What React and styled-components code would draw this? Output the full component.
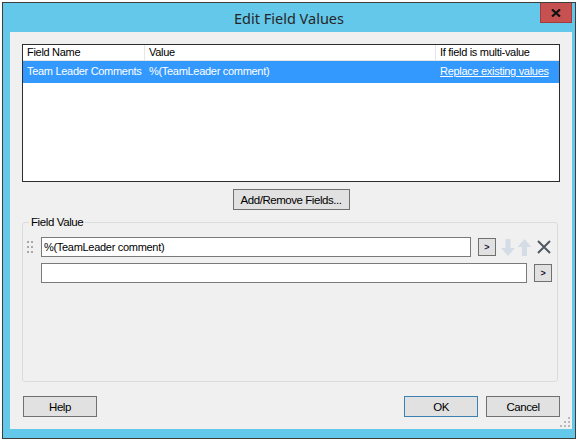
import React from "react";
import styled, { createGlobalStyle } from "styled-components";

const GlobalStyle = createGlobalStyle`
  html, body {
    margin: 0;
    padding: 0;
    background: #ffffff;
  }
  * {
    box-sizing: border-box;
  }
`;

const uiFont = `"Liberation Sans", Arial, sans-serif`;

const Frame = styled.div`
  margin: 2px 0 0 2px;
  width: 574px;
  height: 437px;
  border: 1px solid #3d3d3d;
  background: #63c8ea;
  display: flex;
  flex-direction: column;
  font-family: ${uiFont};
  font-size: 11px;
  letter-spacing: -0.3px;
  color: #000;
`;

const TitleBar = styled.div`
  height: 29px;
  display: grid;
  grid-template-columns: 1fr auto 1fr;
  align-items: center;
`;

const Title = styled.div`
  grid-column: 2;
  font-family: "Noto Sans", "Open Sans", sans-serif;
  font-size: 14.5px;
  letter-spacing: 0;
  color: #262626;
  padding-top: 1px;
`;

const CloseButton = styled.div`
  grid-column: 3;
  justify-self: end;
  align-self: start;
  margin-right: 3px;
  width: 32px;
  height: 20px;
  background: #c75050;
  border: 1px solid #a53c3c;
  border-top: none;
  display: flex;
  align-items: center;
  justify-content: center;
`;

const Client = styled.div`
  position: relative;
  margin: 0 3px 0 7px;
  height: 397px;
  background: #f0f0f0;
  padding: 12px;
  display: flex;
  flex-direction: column;
`;

const ListBox = styled.div`
  height: 138px;
  border: 1px solid #2d2d2d;
  background: #ffffff;
  display: flex;
  flex-direction: column;
`;

const columns = "122px 291px 1fr";

const HeaderRow = styled.div`
  display: grid;
  grid-template-columns: ${columns};
  height: 16px;
`;

const HeaderCell = styled.div`
  padding-left: 4px;
  line-height: 15px;
  border-bottom: 1px solid #e5e5e5;
  border-right: ${(p) => (p.last ? "none" : "1px solid #e5e5e5")};
  white-space: nowrap;
  overflow: hidden;
`;

const DataRow = styled.div`
  display: grid;
  grid-template-columns: ${columns};
  height: 22px;
  background: ${(p) => (p.selected ? "#3399ff" : "transparent")};
  color: ${(p) => (p.selected ? "#ffffff" : "#000000")};
`;

const DataCell = styled.div`
  padding-left: ${(p) => p.pad || 4}px;
  line-height: 21px;
  white-space: nowrap;
  overflow: hidden;
`;

const Link = styled.span`
  text-decoration: underline;
`;

const PushButton = styled.button`
  font-family: ${uiFont};
  font-size: 11.5px;
  letter-spacing: -0.45px;
  color: #000;
  height: 21px;
  width: ${(p) => p.w || 74}px;
  padding: 0;
  background: #e1e1e1;
  border: 1px solid ${(p) => (p.primary ? "#3c7fb1" : "#707070")};
  border-radius: 0;
`;

const CenterRow = styled.div`
  margin-top: 7px;
  display: flex;
  justify-content: center;
`;

const Group = styled.fieldset`
  flex: 1;
  margin: 5px 0 0 0;
  min-width: 0;
  border: 1px solid #dcdcdc;
  border-radius: 3px;
  padding: 8px 5px 8px 4px;
  display: flex;
  flex-direction: column;
  gap: 6px;
  width: 536px;
`;

const Legend = styled.legend`
  margin-left: 2px;
  padding: 0 2px;
  line-height: 14px;
  font-size: 11.5px;
  letter-spacing: -0.4px;
`;

const ValueRow = styled.div`
  display: flex;
  align-items: center;
  height: 20px;
`;

const Grip = styled.div`
  width: 6px;
  margin-right: 8px;
  height: 12px;
  display: grid;
  grid-template-columns: 2px 2px;
  column-gap: 2px;
  row-gap: 3px;
  align-content: center;
  span {
    width: 2px;
    height: 2px;
    background: ${(p) => (p.hidden ? "transparent" : "#a8a8a8")};
  }
`;

const TextBox = styled.div`
  width: ${(p) => p.w}px;
  height: 20px;
  border: 1px solid #7a7a7a;
  background: #ffffff;
  padding-left: 2px;
  line-height: 18px;
  white-space: nowrap;
  overflow: hidden;
`;

const PickButton = styled.div`
  width: 18px;
  height: 18px;
  margin-left: 7px;
  background: #e1e1e1;
  border: 1px solid #707070;
  display: flex;
  align-items: center;
  justify-content: center;
  font-size: 9px;
  font-weight: bold;
  color: #1a1a3a;
  letter-spacing: 0;
`;

const Tools = styled.div`
  display: flex;
  align-items: center;
  margin-left: 5px;
  gap: 2px;
`;

const Footer = styled.div`
  margin-top: 14px;
  padding-left: 1px;
  display: flex;
  align-items: center;
  gap: 8px;
`;

const Spacer = styled.div`
  flex: 1;
`;

const SizeGrip = styled.svg`
  position: absolute;
  right: 2px;
  bottom: 2px;
`;

function Dots({ hidden }) {
  return (
    <Grip hidden={hidden}>
      {Array.from({ length: 6 }).map((_, i) => (
        <span key={i} />
      ))}
    </Grip>
  );
}

function DownArrow() {
  return (
    <svg width="14" height="17" viewBox="0 0 14 17">
      <path d="M4.5 0h5v9h4.5l-7 8-7-8h4.5z" fill="#d4dde6" />
    </svg>
  );
}

function UpArrow() {
  return (
    <svg width="15" height="17" viewBox="0 0 15 17">
      <path d="M7.5 0l7 8h-4.5v9h-5v-9h-4.5z" fill="#d4dde6" />
    </svg>
  );
}

function RemoveIcon() {
  return (
    <svg width="16" height="16" viewBox="0 0 16 16" style={{ marginLeft: 2 }}>
      <path d="M2 2l12 12M14 2l-12 12" stroke="#4f5863" strokeWidth="2" />
    </svg>
  );
}

export default function App() {
  return (
    <>
      <GlobalStyle />
      <Frame>
        <TitleBar>
          <Title>Edit Field Values</Title>
          <CloseButton>
            <svg width="10" height="8" viewBox="0 0 10 8">
              <path d="M1 0.5l8 7M9 0.5l-8 7" stroke="#111" strokeWidth="2.2" />
            </svg>
          </CloseButton>
        </TitleBar>
        <Client>
          <ListBox>
            <HeaderRow>
              <HeaderCell>Field Name</HeaderCell>
              <HeaderCell>Value</HeaderCell>
              <HeaderCell last>If field is multi-value</HeaderCell>
            </HeaderRow>
            <DataRow selected>
              <DataCell>Team Leader Comments</DataCell>
              <DataCell>%(TeamLeader comment)</DataCell>
              <DataCell pad={4}>
                <Link>Replace existing values</Link>
              </DataCell>
            </DataRow>
          </ListBox>
          <CenterRow>
            <PushButton w={117}>Add/Remove Fields...</PushButton>
          </CenterRow>
          <Group>
            <Legend>Field Value</Legend>
            <ValueRow>
              <Dots />
              <TextBox w={430}>%(TeamLeader comment)</TextBox>
              <PickButton>&gt;</PickButton>
              <Tools>
                <DownArrow />
                <UpArrow />
                <RemoveIcon />
              </Tools>
            </ValueRow>
            <ValueRow>
              <Dots hidden />
              <TextBox w={487} />
              <PickButton>&gt;</PickButton>
            </ValueRow>
          </Group>
          <Footer>
            <PushButton>Help</PushButton>
            <Spacer />
            <PushButton primary>OK</PushButton>
            <PushButton>Cancel</PushButton>
          </Footer>
          <SizeGrip width="10" height="10" viewBox="0 0 10 10">
            {[
              [8, 0],
              [8, 4],
              [4, 4],
              [8, 8],
              [4, 8],
              [0, 8],
            ].map(([x, y]) => (
              <rect key={`${x}-${y}`} x={x} y={y} width="2" height="2" fill="#b8b8b8" />
            ))}
          </SizeGrip>
        </Client>
      </Frame>
    </>
  );
}
